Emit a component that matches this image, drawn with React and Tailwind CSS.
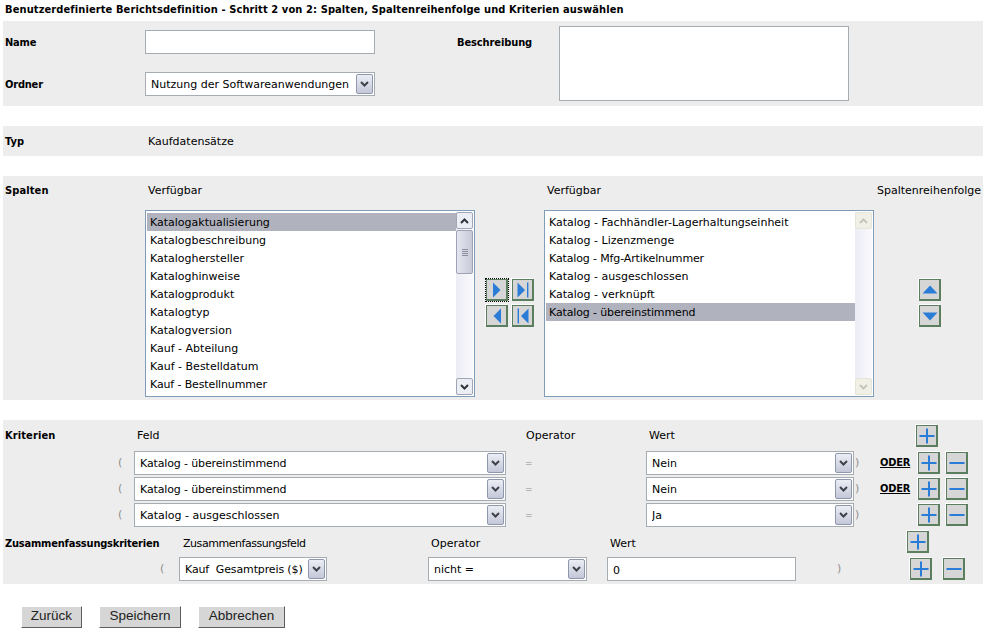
const F = "font-[DejaVu_Sans,sans-serif] text-[11px] leading-[14px] text-black";
const B = "font-[DejaVu_Sans_Condensed,sans-serif] font-bold tracking-[0.11px]";
const MM = "tracking-[-0.13px]";

function Chev({ className = "" }) {
  return (
    <svg width="9" height="6" viewBox="0 0 9 6" className={className}>
      <path d="M1 1l3.5 3.5L8 1" fill="none" stroke="currentColor" strokeWidth="2" />
    </svg>
  );
}

function Select({ w, children, tight }) {
  return (
    <div className={`${w} h-6 shrink-0 flex items-center bg-white border border-[#a5acb2] pl-[5px] pr-px`}>
      <span className={`flex-1 pt-[2px] whitespace-pre overflow-hidden ${tight ? MM : ""}`}>{children}</span>
      <span className="w-[17px] h-5 flex items-center justify-center rounded-[2px] border border-[#8f97ad] bg-gradient-to-b from-[#eceef5] to-[#c3c7d8] text-[#3f4248]">
        <Chev />
      </span>
    </div>
  );
}

function Glyph({ kind }) {
  const blue = "#2b7cd6";
  const g = {
    right: <path d="M7 3.5l7.5 7.5L7 18.5z" fill={blue} />,
    rightEnd: <path d="M5.5 3.5l7.5 7.5-7.5 7.5zM15 3.5h1.4v15H15z" fill={blue} />,
    left: <path d="M15 3.5L7.5 11l7.5 7.5z" fill={blue} />,
    leftEnd: <path d="M16.5 3.5L9 11l7.5 7.5zM5.6 3.5H7v15H5.6z" fill={blue} />,
    up: <path d="M3.5 14.5l7.5-8 7.5 8z" fill={blue} />,
    down: <path d="M3.5 7.5h15l-7.5 8z" fill={blue} />,
    plus: <path d="M3.5 10h15v2h-15zM10 3.5h2v15h-2z" fill={blue} />,
    minus: <path d="M3.5 10h15v2h-15z" fill={blue} />,
  }[kind];
  return (
    <svg width="22" height="22" viewBox="0 0 22 22" className="block">
      {g}
    </svg>
  );
}

function IconBtn({ kind, focus }) {
  return (
    <span className={`block w-[24px] h-[24px] p-px shrink-0 ${focus ? "outline outline-1 outline-dotted outline-black -outline-offset-1" : ""}`}>
      <span className="block w-[22px] h-[22px] bg-[#d6d6d6] border-2 border-[#5b7f5e] border-t-[1px] border-l-[1px] overflow-hidden shadow-[-1px_-1px_0_#ffffff]">
        <span className="block -mt-[1px] -ml-[1px]">
          <Glyph kind={kind} />
        </span>
      </span>
    </span>
  );
}

function Sb({ kind }) {
  const dis = kind === "dis";
  const b = dis ? "border-[#e6e6d8] bg-[#f0f0e6] text-[#c6c6bc]" : "border-[#a2a5b4] bg-[#eceef6] text-[#30343c]";
  return (
    <div className="w-[17px] shrink-0 h-full flex flex-col justify-between bg-gradient-to-r from-[#ecedf5] to-[#fafafd] ml-auto">
      <span className={`h-[17px] flex items-center justify-center rounded-[2px] border ${b}`}>
        <Chev className="rotate-180" />
      </span>
      {!dis && (
        <span className="absolute top-[19px] right-[1px] w-[17px] h-[44px] rounded-[2px] border border-[#9ea2b4] bg-gradient-to-r from-[#e4e5f0] to-[#c8cad8] flex flex-col items-center justify-center gap-px">
          <i className="block w-[6px] h-px bg-[#8e90a0]" />
          <i className="block w-[6px] h-px bg-[#8e90a0]" />
          <i className="block w-[6px] h-px bg-[#8e90a0]" />
          <i className="block w-[6px] h-px bg-[#8e90a0]" />
        </span>
      )}
      <span className={`h-[17px] flex items-center justify-center rounded-[2px] border ${b}`}>
        <Chev />
      </span>
    </div>
  );
}

function ListBox({ items, sel, dis }) {
  return (
    <div className="relative w-[330px] h-[187px] shrink-0 bg-white border border-[#7f9db9] p-px flex">
      <div className="w-[309px] shrink-0 pt-[1px]">
        {items.map((t) => (
          <div key={t} className={`h-[18px] pl-[3px] pt-[2px] flex items-center whitespace-pre ${t === sel ? "bg-[#b0b2bd]" : ""} ${t.includes("mm") ? MM : ""}`}>
            {t}
          </div>
        ))}
      </div>
      <Sb kind={dis ? "dis" : "on"} />
    </div>
  );
}

function Label({ children, className = "" }) {
  return <span className={`${B} whitespace-pre ${className}`}>{children}</span>;
}

function Paren({ children, className = "" }) {
  return <span className={`text-[#8c8c8c] shrink-0 ${className}`}>{children}</span>;
}

function CritRow({ field, value, oder, tight }) {
  return (
    <div className="flex items-center h-6">
      <Paren className="ml-[113px] w-[16px]">(</Paren>
      <Select w="w-[372px]" tight={tight}>{field}</Select>
      <Paren className="ml-[19px] w-[121px] text-[9px]">=</Paren>
      <Select w="w-[208px]">{value}</Select>
      <Paren className="w-[26px] pl-px">)</Paren>
      <span className={`${B} w-[37px] underline tracking-[-0.2px]! ${oder ? "" : "invisible"}`}>ODER</span>
      <IconBtn kind="plus" />
      <span className="w-[4px]" />
      <IconBtn kind="minus" />
    </div>
  );
}

function WinBtn({ children, w }) {
  return (
    <button className={`${w} h-[22px] pb-[2px] bg-[#d6d6d6] border border-t-white border-l-white border-r-[#5d5d5d] border-b-[#5d5d5d] font-[Liberation_Sans,sans-serif] text-[13.5px] leading-none text-[#222]`}>
      {children}
    </button>
  );
}

const left = ["Katalogaktualisierung", "Katalogbeschreibung", "Kataloghersteller", "Kataloghinweise", "Katalogprodukt", "Katalogtyp", "Katalogversion", "Kauf - Abteilung", "Kauf - Bestelldatum", "Kauf - Bestellnummer"];
const right = ["Katalog - Fachhändler-Lagerhaltungseinheit", "Katalog - Lizenzmenge", "Katalog - Mfg-Artikelnummer", "Katalog - ausgeschlossen", "Katalog - verknüpft", "Katalog - übereinstimmend"];

export default function App() {
  return (
    <div className={`${F} w-[983px] h-[638px] bg-white overflow-hidden`}>
      <div className={`${B} h-[21px] pl-[5px] pt-[3px] whitespace-pre`}>Benutzerdefinierte Berichtsdefinition - Schritt 2 von 2: Spalten, Spaltenreihenfolge und Kriterien auswählen</div>

      <div className="ml-[3px] h-[85px] bg-[#ededed] flex pl-[2px]">
        <div className="w-[140px] shrink-0 flex flex-col">
          <Label className="mt-[15px] tracking-[-0.2px]!">Name</Label>
          <Label className="mt-[28px] tracking-[-0.2px]!">Ordner</Label>
        </div>
        <div className="w-[312px] shrink-0 flex flex-col pt-[9px] gap-[18px]">
          <input className="w-[230px] h-6 bg-white border border-[#a5acb2]" />
          <Select w="w-[230px]">Nutzung der Softwareanwendungen</Select>
        </div>
        <Label className="w-[102px] shrink-0 mt-[15px] tracking-[-0.1px]!">Beschreibung</Label>
        <textarea className="w-[290px] h-[75px] mt-[5px] bg-white border border-[#a5acb2] resize-none" />
      </div>

      <div className="ml-[3px] mt-5 h-[30px] bg-[#ededed] flex items-center pl-[2px] pt-[2px]">
        <Label className="w-[143px]">Typ</Label>
        <span>Kaufdatensätze</span>
      </div>

      <div className="ml-[3px] mt-5 h-[224px] bg-[#ededed] pl-[2px] flex flex-col">
        <div className="flex pt-[8px] h-[34px]">
          <Label className="w-[143px]">Spalten</Label>
          <span className="w-[399px]">Verfügbar</span>
          <span className="w-[330px]">Verfügbar</span>
          <span className="whitespace-pre">Spaltenreihenfolge</span>
        </div>
        <div className="flex">
          <span className="w-[140px] shrink-0" />
          <ListBox items={left} sel="Katalogaktualisierung" />
          <div className="w-[69px] shrink-0 flex flex-col gap-[2px] pt-[68px] pl-[10px]">
            <div className="flex gap-[2px]">
              <IconBtn kind="right" focus />
              <IconBtn kind="rightEnd" />
            </div>
            <div className="flex gap-[2px]">
              <IconBtn kind="left" />
              <IconBtn kind="leftEnd" />
            </div>
          </div>
          <ListBox items={right} sel="Katalog - übereinstimmend" dis />
          <div className="ml-[44px] flex flex-col gap-[2px] pt-[68px]">
            <IconBtn kind="up" />
            <IconBtn kind="down" />
          </div>
        </div>
      </div>

      <div className="ml-[3px] mt-5 h-[164px] bg-[#ededed] pl-[2px] flex flex-col">
        <div className="flex items-center h-[31px]">
          <Label className="w-[132px]">Kriterien</Label>
          <span className="w-[389px]">Feld</span>
          <span className="w-[123px]">Operator</span>
          <span className="w-[266px]">Wert</span>
          <IconBtn kind="plus" />
        </div>
        <div className="flex flex-col gap-[2px]">
          <CritRow field="Katalog - übereinstimmend" value="Nein" oder tight />
          <CritRow field="Katalog - übereinstimmend" value="Nein" oder tight />
          <CritRow field="Katalog - ausgeschlossen" value="Ja" />
        </div>
        <div className="flex items-center h-[30px]">
          <Label className="w-[178px] mt-[4px] tracking-[-0.2px]!">Zusammenfassungskriterien</Label>
          <span className="w-[248px] mt-[4px] tracking-[-0.45px] whitespace-pre">Zusammenfassungsfeld</span>
          <span className="w-[179px] mt-[4px]">Operator</span>
          <span className="w-[296px] mt-[4px]">Wert</span>
          <IconBtn kind="plus" />
        </div>
        <div className="flex items-center h-6">
          <Paren className="ml-[155px] w-[19px]">(</Paren>
          <Select w="w-[148px]" tight>Kauf  Gesamtpreis ($)</Select>
          <span className="w-[101px] shrink-0" />
          <Select w="w-[159px]">nicht =</Select>
          <span className="w-[20px] shrink-0" />
          <input className="w-[189px] h-6 shrink-0 bg-white border border-[#a5acb2] pl-[5px] pt-[2px]" defaultValue="0" />
          <Paren className="ml-[41px] w-[72px]">)</Paren>
          <IconBtn kind="plus" />
          <span className="w-[9px]" />
          <IconBtn kind="minus" />
        </div>
      </div>

      <div className="flex pl-[21px] pt-[22px] gap-[17px]">
        <WinBtn w="w-[61px]">Zurück</WinBtn>
        <WinBtn w="w-[82px]">Speichern</WinBtn>
        <WinBtn w="w-[87px]">Abbrechen</WinBtn>
      </div>
    </div>
  );
}
